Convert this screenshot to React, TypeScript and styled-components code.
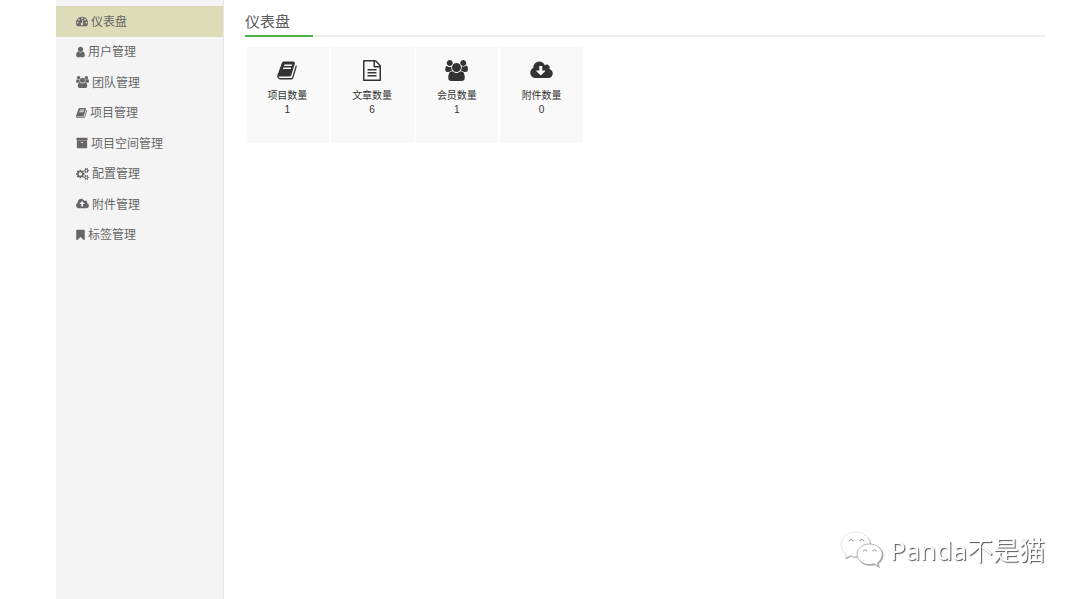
import React from 'react';
import styled, { createGlobalStyle } from 'styled-components';

const GlobalStyle = createGlobalStyle`
  *, *::before, *::after { box-sizing: border-box; }
  body {
    margin: 0;
    background: #fff;
    color: #333;
    font-family: "Liberation Sans", "Noto Sans CJK SC", sans-serif;
  }
`;

interface Glyph {
  x: number;
  span: number;
  d: string;
}

const COG_SMALL =
  'v140q0 16-149 31-12 27-30 52 51 113 51 138 0 4-4 7-122 71-124 71-8 0-46-47t-52-68q-20 2-30 2t-30-2q-14 21-52 68t-46 47q-2 0-124-71-4-3-4-7 0-25 51-138-18-25-30-52-149-15-149-31v-140q0-16 149-31 13-29 30-52-51-113-51-138 0-4 4-7 4-2 35-20t59-34 30-16q8 0 46 46.5t52 67.5q20-2 30-2t30 2q51-71 92-112l6-2q4 0 124 70 4 3 4 7 0 25-51 138 17 23 30 52 149 15 149 31z';
const CLOUD =
  'm640 224q0 159-112.5 271.5t-271.5 112.5h-1088q-185 0-316.5-131.5t-131.5-316.5q0-130 70-240t188-165q-2-30-2-43 0-212 150-362t362-150q156 0 285.5 87t188.5 231q71-62 166-62 106 0 181 75t75 181q0 76-41 138 130 31 213.5 135.5t83.5 238.5z';

const glyphs: Record<string, Glyph> = {
  dashboard: {
    x: 0,
    span: 1792,
    d: 'M384 1152q0-53-37.5-90.5t-90.5-37.5-90.5 37.5-37.5 90.5 37.5 90.5 90.5 37.5 90.5-37.5 37.5-90.5zm192-448q0-53-37.5-90.5t-90.5-37.5-90.5 37.5-37.5 90.5 37.5 90.5 90.5 37.5 90.5-37.5 37.5-90.5zm428 481l101-382q6-26-7.5-48.5t-38.5-29.5-48 6.5-30 39.5l-101 382q-60 5-107 43.5t-63 98.5q-20 77 20 146t117 89 146-20 89-117q16-60-6-117t-72-91zm660-33q0-53-37.5-90.5t-90.5-37.5-90.5 37.5-37.5 90.5 37.5 90.5 90.5 37.5 90.5-37.5 37.5-90.5zm-640-640q0-53-37.5-90.5t-90.5-37.5-90.5 37.5-37.5 90.5 37.5 90.5 90.5 37.5 90.5-37.5 37.5-90.5zm448 192q0-53-37.5-90.5t-90.5-37.5-90.5 37.5-37.5 90.5 37.5 90.5 90.5 37.5 90.5-37.5 37.5-90.5zm320 448q0 261-141 483-19 29-54 29h-1402q-35 0-54-29-141-221-141-483 0-182 71-348t191-286 286-191 348-71 348 71 286 191 191 286 71 348z',
  },
  user: {
    x: 256,
    span: 1280,
    d: 'M1536 1399q0 109-62.5 187t-150.5 78h-854q-88 0-150.5-78t-62.5-187q0-85 8.5-160.5t31.5-152 58.5-131 94-89 134.5-34.5q131 128 313 128t313-128q76 0 134.5 34.5t94 89 58.5 131 31.5 152 8.5 160.5zm-256-887q0 159-112.5 271.5t-271.5 112.5-271.5-112.5-112.5-271.5 112.5-271.5 271.5-112.5 271.5 112.5 112.5 271.5z',
  },
  users: {
    x: -64,
    span: 1920,
    d: 'M529 896q-162 5-265 128h-134q-82 0-138-40.5t-56-118.5q0-353 124-353 6 0 43.5 21t97.5 42.5 119 21.5q67 0 133-23-5 37-5 66 0 159 90 294zm1071 637q0 120-73 189.5t-194 69.5h-874q-121 0-194-69.5t-73-189.5q0-53 3.5-103.5t14-109 26.5-108.5 43-97.5 62-81 85.5-53.5 111.5-20q10 0 43 21.5t73 48 107 48 135 21.5 135-21.5 107-48 73-48 43-21.5q61 0 111.5 20t85.5 53.5 62 81 43 97.5 26.5 108.5 14 109 3.5 103.5zm-1024-1277q0 106-75 181t-181 75-181-75-75-181 75-181 181-75 181 75 75 181zm704 384q0 159-112.5 271.5t-271.5 112.5-271.5-112.5-112.5-271.5 112.5-271.5 271.5-112.5 271.5 112.5 112.5 271.5zm576 225q0 78-56 118.5t-138 40.5h-134q-103-123-265-128 90-135 90-294 0-29-5-66 66 23 133 23 59 0 119-21.5t97.5-42.5 43.5-21q124 0 124 353zm-128-609q0 106-75 181t-181 75-181-75-75-181 75-181 181-75 181 75 75 181z',
  },
  book: {
    x: 64,
    span: 1664,
    d: 'M1703 478q40 57 18 129l-275 906q-19 64-76.5 107.5t-122.5 43.5h-923q-77 0-148.5-53.5t-99.5-131.5q-24-67-2-127 0-4 3-27t4-37q1-8-3-21.5t-3-19.5q2-11 8-21t16.5-23.5 16.5-23.5q23-38 45-91.5t30-91.5q3-10 .5-30t-.5-28q3-11 17-28t17-23q21-36 42-92t25-90q1-9-2.5-32t.5-28q4-13 22-30.5t22-22.5q19-26 42.5-84.5t27.5-96.5q1-8-3-25.5t-2-26.5q2-8 9-18t18-23 17-21q8-12 16.5-30.5t15-35 16-36 19.5-32 26.5-23.5 36-11.5 47.5 5.5l-1 3q38-9 51-9h761q74 0 114 56t18 130l-274 906q-36 119-71.5 153.5t-128.5 34.5h-869q-27 0-38 15-11 16-1 43 24 70 144 70h923q29 0 56-15.5t35-41.5l300-987q7-22 5-57 38 15 59 43zm-1064 2q-4 13 2 22.5t20 9.5h608q13 0 25.5-9.5t16.5-22.5l21-64q4-13-2-22.5t-20-9.5h-608q-13 0-25.5 9.5t-16.5 22.5zm-83 256q-4 13 2 22.5t20 9.5h608q13 0 25.5-9.5t16.5-22.5l21-64q4-13-2-22.5t-20-9.5h-608q-13 0-25.5 9.5t-16.5 22.5z',
  },
  archive: {
    x: 0,
    span: 1792,
    d: 'M1088 832q0-26-19-45t-45-19h-256q-26 0-45 19t-19 45 19 45 45 19h256q26 0 45-19t19-45zm576-192v960q0 26-19 45t-45 19h-1408q-26 0-45-19t-19-45v-960q0-26 19-45t45-19h1408q26 0 45 19t19 45zm64-448v256q0 26-19 45t-45 19h-1536q-26 0-45-19t-19-45v-256q0-26 19-45t45-19h1536q26 0 45 19t19 45z',
  },
  cogs: {
    x: -64,
    span: 1920,
    d:
      'M832 896q0-106-75-181t-181-75-181 75-75 181 75 181 181 75 181-75 75-181zm768 512q0-52-38-90t-90-38-90 38-38 90q0 53 37.5 90.5t90.5 37.5 90.5-37.5 37.5-90.5zm0-1024q0-52-38-90t-90-38-90 38-38 90q0 53 37.5 90.5t90.5 37.5 90.5-37.5 37.5-90.5zm-384 421v185q0 10-7 19.5t-16 10.5l-155 24q-11 35-32 76 34 48 90 115 7 11 7 20 0 12-7 19-23 30-82.5 89.5t-78.5 59.5q-11 0-21-7l-115-90q-37 19-77 31-11 108-23 155-7 24-30 24h-186q-11 0-20-7.5t-10-17.5l-23-153q-34-10-75-31l-118 89q-7 7-20 7-11 0-21-8-144-133-144-160 0-9 7-19 10-14 41-53t47-61q-23-44-35-82l-152-24q-10-1-17-9.5t-7-19.5v-185q0-10 7-19.5t16-10.5l155-24q11-35 32-76-34-48-90-115-7-11-7-20 0-12 7-20 22-30 82-89t79-59q11 0 21 7l115 90q34-18 77-32 11-108 23-154 7-24 30-24h186q11 0 20 7.5t10 17.5l23 153q34 10 75 31l118-89q8-7 20-7 11 0 21 8 144 133 144 160 0 8-7 19-12 16-42 54t-45 60q23 48 34 82l152 23q10 2 17 10.5t7 19.5z' +
      'M1856 1338' + COG_SMALL + 'M1856 314' + COG_SMALL,
  },
  cloudUpload: {
    x: -64,
    span: 1920,
    d:
      'M1216 864q0-14-9-23l-352-352q-9-9-23-9t-23 9l-351 351q-10 12-10 24 0 14 9 23t23 9h224v352q0 13 9.5 22.5t22.5 9.5h192q13 0 22.5-9.5t9.5-22.5v-352h224q13 0 22.5-9.5t9.5-22.5zM1216 928' + CLOUD,
  },
  cloudDownload: {
    x: -64,
    span: 1920,
    d:
      'M1216 928q0-14-9-23t-23-9h-224v-352q0-13-9.5-22.5t-22.5-9.5h-192q-13 0-22.5 9.5t-9.5 22.5v352h-224q-13 0-22.5 9.5t-9.5 22.5q0 14 9 23l352 352q9 9 23 9t23-9l351-351q10-12 10-24z' + CLOUD,
  },
  bookmark: {
    x: 256,
    span: 1280,
    d: 'M1420 128q23 0 44 9 33 13 52.5 41t19.5 62v1289q0 34-19.5 62t-52.5 41q-19 8-44 8-48 0-83-32l-441-424-441 424q-36 33-83 33-23 0-44-9-33-13-52.5-41t-19.5-62v-1289q0-34 19.5-62t52.5-41q21-9 44-9h1048z',
  },
  fileText: {
    x: 128,
    span: 1536,
    d: 'M1596 380q28 28 48 76t20 88v1152q0 40-28 68t-68 28h-1344q-40 0-68-28t-28-68v-1600q0-40 28-68t68-28h896q40 0 88 20t76 48zm-444-244v376h376q-10-29-22-41l-313-313q-12-12-41-22zm384 1528v-1024h-416q-40 0-68-28t-28-68v-416h-768v1536h1280zm-1024-864q0-14 9-23t23-9h704q14 0 23 9t9 23v64q0 14-9 23t-23 9h-704q-14 0-23-9t-9-23v-64zm736 224q14 0 23 9t9 23v64q0 14-9 23t-23 9h-704q-14 0-23-9t-9-23v-64q0-14 9-23t23-9h704zm0 256q14 0 23 9t9 23v64q0 14-9 23t-23 9h-704q-14 0-23-9t-9-23v-64q0-14 9-23t23-9h704z',
  },
};

const Svg = styled.svg`
  display: block;
  flex: none;
  fill: currentColor;
  overflow: visible;
`;

function Icon({ name, size }: { name: string; size: number }) {
  const g = glyphs[name];
  return (
    <Svg
      width={Math.round((g.span / 1792) * size)}
      height={size}
      viewBox={`${g.x} 0 ${g.span} 1792`}
      aria-hidden="true"
    >
      <path d={g.d} />
    </Svg>
  );
}

const Page = styled.div`
  display: flex;
  min-height: 100vh;
  padding: 0 35px 0 56px;
`;

const Sidebar = styled.nav`
  flex: none;
  width: 168px;
  padding-top: 6px;
  background: #f4f4f4;
  border-right: 1px solid #e7e7e7;
`;

const Menu = styled.ul`
  display: grid;
  grid-auto-rows: 1fr;
  min-height: 244px;
  margin: 0;
  padding: 0;
  list-style: none;
`;

const MenuLink = styled.a<{ $active?: boolean }>`
  display: flex;
  align-items: center;
  gap: 3px;
  height: 100%;
  padding-left: 20px;
  background: ${(p) => (p.$active ? '#dcdcb8' : 'transparent')};
  color: #666;
  font-size: 12px;
  line-height: 18px;
  text-decoration: none;
`;

const MenuLabel = styled.span`
  padding-top: 1px;
`;

const Main = styled.main`
  flex: 1;
  min-width: 0;
  padding: 6px 0 0 21px;
`;

const Header = styled.header`
  display: flex;
  height: 31px;
  border-bottom: 2px solid #eee;
`;

const Title = styled.h1`
  height: 31px;
  margin: 0;
  padding-right: 23px;
  border-bottom: 2px solid #4db04a;
  color: #5c5c5c;
  font-size: 15px;
  font-weight: 400;
  line-height: 32px;
`;

const Stats = styled.section`
  display: grid;
  grid-template-columns: repeat(4, 1fr);
  gap: 2px;
  max-width: 338px;
  padding: 10px 0 0 1px;
`;

const Card = styled.a`
  display: flex;
  flex-direction: column;
  align-items: center;
  min-height: 96px;
  padding-top: 13px;
  background: #f9f9f9;
  color: #333;
  font-size: 10px;
  line-height: 14px;
  text-decoration: none;
`;

const CardLabel = styled.span`
  margin-top: 8px;
`;

const Watermark = styled.div`
  position: fixed;
  right: 35px;
  bottom: 29px;
  display: flex;
  align-items: center;
  gap: 5px;
  color: #fff;
  font-family: "Noto Sans", "Noto Sans CJK SC", sans-serif;
  font-size: 26px;
  line-height: 40px;
  text-shadow: 1px 1px 1px #555;
`;

const Bubbles = styled.svg`
  display: block;
  filter: drop-shadow(1px 1px 0 #aaa);
`;

const menu = [
  { icon: 'dashboard', label: '仪表盘' },
  { icon: 'user', label: '用户管理' },
  { icon: 'users', label: '团队管理' },
  { icon: 'book', label: '项目管理' },
  { icon: 'archive', label: '项目空间管理' },
  { icon: 'cogs', label: '配置管理' },
  { icon: 'cloudUpload', label: '附件管理' },
  { icon: 'bookmark', label: '标签管理' },
];

const stats = [
  { icon: 'book', label: '项目数量', value: 1 },
  { icon: 'fileText', label: '文章数量', value: 6 },
  { icon: 'users', label: '会员数量', value: 1 },
  { icon: 'cloudDownload', label: '附件数量', value: 0 },
];

export default function App() {
  return (
    <>
      <GlobalStyle />
      <Page>
        <Sidebar>
          <Menu>
            {menu.map((m, i) => (
              <li key={m.label}>
                <MenuLink href="#" $active={i === 0} aria-current={i === 0 ? 'page' : undefined}>
                  <Icon name={m.icon} size={12} />
                  <MenuLabel>{m.label}</MenuLabel>
                </MenuLink>
              </li>
            ))}
          </Menu>
        </Sidebar>
        <Main>
          <Header>
            <Title>仪表盘</Title>
          </Header>
          <Stats>
            {stats.map((s) => (
              <Card href="#" key={s.label}>
                <Icon name={s.icon} size={21} />
                <CardLabel>{s.label}</CardLabel>
                <span>{s.value}</span>
              </Card>
            ))}
          </Stats>
        </Main>
      </Page>
      <Watermark>
        <Bubbles width="45" height="40" viewBox="0 0 45 40" aria-hidden="true">
          <path
            fill="#fff"
            stroke="#ddd"
            strokeWidth=".7"
            d="M15.500 2C7.500 2 1 7.500 1 14.400c0 3.900 2 7.300 5.300 9.500L5 28l4.900-2.500c1.800.6 3.600.9 5.600.9 8 0 14.500-5.400 14.500-12.100S23.500 2 15.500 2z"
          />
          <g fill="none" stroke="#999" strokeWidth="1">
            <path d="M9 11.500a2 2 0 0 1 4 0M20 11.500a2 2 0 0 1 4 0" />
          </g>
          <path
            fill="#fff"
            stroke="#999"
            strokeWidth=".7"
            d="M29.500 14C22.500 14 17 18.500 17 24.200s5.500 10.300 12.500 10.300c1.700 0 3.200-.3 4.700-.8L38.500 36.500l-1.100-3.700c2.900-2 4.800-5 4.800-8.600 0-5.700-5.700-10.200-12.700-10.200z"
          />
          <g fill="none" stroke="#999" strokeWidth="1">
            <path d="M23.500 21.500a1.700 1.700 0 0 1 3.400 0M33 21.500a1.700 1.700 0 0 1 3.400 0" />
          </g>
        </Bubbles>
        <span>Panda不是猫</span>
      </Watermark>
    </>
  );
}
